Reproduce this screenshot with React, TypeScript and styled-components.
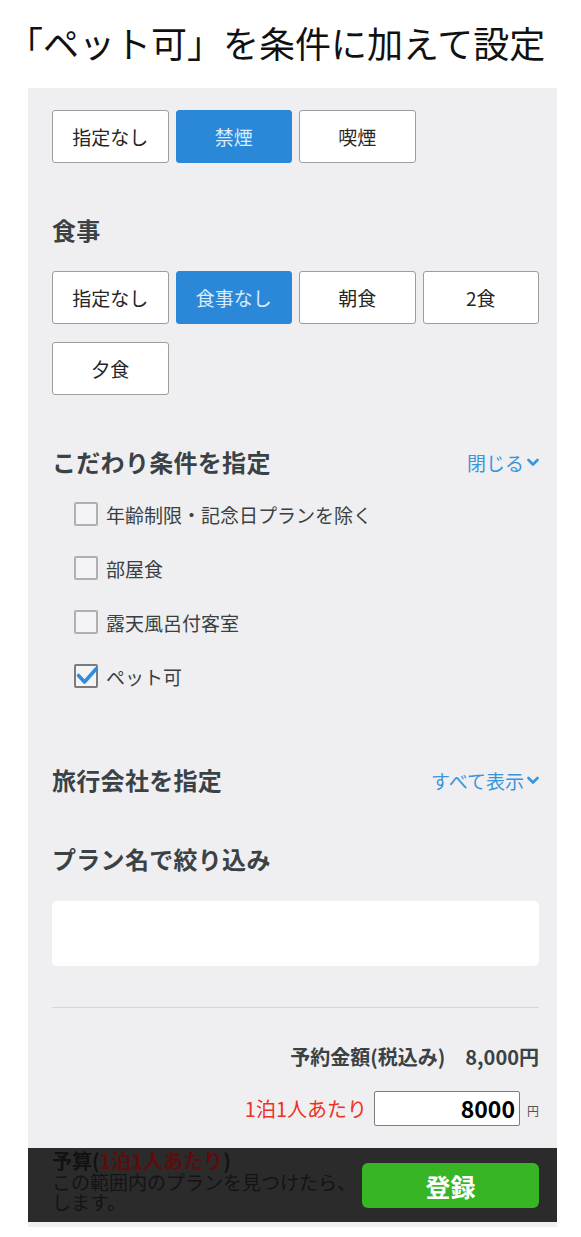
import React from "react";
import styled, { createGlobalStyle } from "styled-components";

const GlobalStyle = createGlobalStyle`
    body {
        margin: 0;
        background: #fff;
        font-family: "Noto Sans CJK JP", "Noto Sans", sans-serif;
    }
    * {
        box-sizing: border-box;
    }
`;

const Page = styled.div`
    width: 581px;
    min-height: 1237px;
    background: #fff;
`;

const Title = styled.h1`
    margin: 0;
    height: 88px;
    padding-left: 7px;
    font-size: 36px;
    font-weight: 400;
    line-height: 84px;
    color: #111;
    white-space: nowrap;
`;

const Panel = styled.div`
    margin-left: 28px;
    width: 529px;
    background: #efeff1;
    padding-bottom: 5px;
`;

const Content = styled.div`
    padding: 22px 18px 22px 24px;
`;

const ChoiceGrid = styled.div<{ $top?: number }>`
    display: grid;
    grid-template-columns: repeat(4, 1fr);
    column-gap: 7px;
    row-gap: 18px;
    margin-top: ${(p) => p.$top ?? 0}px;
`;

const Choice = styled.button<{ $active?: boolean }>`
    height: 53px;
    padding: 0;
    border-radius: 3px;
    border: 1.5px solid ${(p) => (p.$active ? "#2b88d8" : "#9d9d9d")};
    background: ${(p) => (p.$active ? "#2b88d8" : "#fff")};
    color: ${(p) => (p.$active ? "#d8ecfb" : "#262626")};
    font-family: inherit;
    font-size: 19px;
    cursor: pointer;
`;

const SectionHead = styled.div<{ $top: number }>`
    display: flex;
    justify-content: space-between;
    align-items: center;
    height: 32px;
    margin-top: ${(p) => p.$top}px;
`;

const HeadText = styled.h2`
    margin: 0;
    font-size: 24px;
    font-weight: 700;
    line-height: 32px;
    letter-spacing: 0.3px;
    color: #3a4246;
`;

const ToggleLink = styled.a`
    display: flex;
    align-items: center;
    gap: 3px;
    font-size: 19px;
    color: #3a95dc;
    cursor: pointer;
`;

const CheckList = styled.div`
    margin-top: 9px;
    display: flex;
    flex-direction: column;
`;

const CheckRow = styled.label`
    display: flex;
    align-items: center;
    gap: 8px;
    height: 54px;
    padding-left: 22px;
    font-size: 19px;
    color: #3a3f42;
`;

const Box = styled.span<{ $checked?: boolean }>`
    position: relative;
    width: 24px;
    height: 24px;
    border-radius: 2px;
    border: 2px solid ${(p) => (p.$checked ? "#7b7b7b" : "#b0b0b0")};
    background: #f4f4f6;
    flex-shrink: 0;
`;

const CheckMark = styled.svg`
    position: absolute;
    left: -1px;
    top: -3px;
`;

const TextInput = styled.div`
    margin-top: 26px;
    height: 65px;
    background: #fff;
    border-radius: 5px;
`;

const Divider = styled.hr`
    margin: 41px 0 0;
    border: none;
    border-top: 1px solid #d6d6d9;
`;

const PriceLine = styled.div`
    margin-top: 35px;
    display: flex;
    justify-content: flex-end;
    gap: 20px;
    font-size: 20px;
    font-weight: 700;
    line-height: 28px;
    color: #3a4246;
`;

const BudgetRow = styled.div`
    margin-top: 20px;
    display: flex;
    justify-content: flex-end;
    align-items: center;
    gap: 7px;
`;

const RedNote = styled.span`
    font-size: 20px;
    color: #ee3124;
`;

const AmountBox = styled.div`
    width: 146px;
    height: 35px;
    background: #fff;
    border: 1.5px solid #7d7d7d;
    border-radius: 2px;
    padding-right: 4px;
    text-align: right;
    font-size: 23px;
    font-weight: 700;
    line-height: 32px;
    color: #000;
`;

const Yen = styled.span`
    font-size: 12px;
    color: #555;
    margin-top: 4px;
`;

const FooterBar = styled.div`
    display: flex;
    justify-content: space-between;
    align-items: flex-start;
    height: 74px;
    background: #2b2b2b;
    overflow: hidden;
    padding: 2px 18px 0 24px;
`;

const Peek = styled.div`
    width: 312px;
    overflow: hidden;
`;

const PeekTitle = styled.div`
    font-size: 20px;
    font-weight: 700;
    line-height: 22px;
    color: #121212;
`;

const PeekRed = styled.span`
    color: #5c0d0d;
`;

const PeekText = styled.div`
    font-size: 19px;
    line-height: 20px;
    color: #141414;
    white-space: nowrap;
`;

const RegisterButton = styled.button`
    margin-top: 13px;
    width: 177px;
    height: 45px;
    border: none;
    border-radius: 6px;
    background: #38b524;
    color: #fff;
    font-family: inherit;
    font-size: 25px;
    font-weight: 700;
    flex-shrink: 0;
`;

const Chevron = () => (
    <svg width="12" height="9" viewBox="0 0 12 9">
        <polyline points="1.5,2 6,6.5 10.5,2" fill="none" stroke="#3a95dc" strokeWidth="2.6" strokeLinecap="round" strokeLinejoin="round" />
    </svg>
);

const conditions = [
    { label: "年齢制限・記念日プランを除く", checked: false },
    { label: "部屋食", checked: false },
    { label: "露天風呂付客室", checked: false },
    { label: "ペット可", checked: true },
];

const App: React.FC = () => {
    return (
        <Page>
            <GlobalStyle />
            <Title>「ペット可」を条件に加えて設定</Title>
            <Panel>
                <Content>
                    <ChoiceGrid>
                        <Choice>指定なし</Choice>
                        <Choice $active>禁煙</Choice>
                        <Choice>喫煙</Choice>
                    </ChoiceGrid>

                    <SectionHead $top={51}>
                        <HeadText>食事</HeadText>
                    </SectionHead>
                    <ChoiceGrid $top={25}>
                        <Choice>指定なし</Choice>
                        <Choice $active>食事なし</Choice>
                        <Choice>朝食</Choice>
                        <Choice>2食</Choice>
                        <Choice>夕食</Choice>
                    </ChoiceGrid>

                    <SectionHead $top={51}>
                        <HeadText>こだわり条件を指定</HeadText>
                        <ToggleLink>閉じる<Chevron /></ToggleLink>
                    </SectionHead>
                    <CheckList>
                        {conditions.map((c) => (
                            <CheckRow key={c.label}>
                                <Box $checked={c.checked}>
                                    {c.checked && (
                                        <CheckMark width="24" height="24" viewBox="0 0 24 24">
                                            <polyline points="3.5,12.5 9.5,19 21,6" fill="none" stroke="#2d8ee0" strokeWidth="3.6" strokeLinecap="round" strokeLinejoin="round" />
                                        </CheckMark>
                                    )}
                                </Box>
                                {c.label}
                            </CheckRow>
                        ))}
                    </CheckList>

                    <SectionHead $top={61}>
                        <HeadText>旅行会社を指定</HeadText>
                        <ToggleLink>すべて表示<Chevron /></ToggleLink>
                    </SectionHead>

                    <SectionHead $top={47}>
                        <HeadText>プラン名で絞り込み</HeadText>
                    </SectionHead>
                    <TextInput />

                    <Divider />

                    <PriceLine>
                        <span>予約金額(税込み)</span>
                        <span>8,000円</span>
                    </PriceLine>
                    <BudgetRow>
                        <RedNote>1泊1人あたり</RedNote>
                        <AmountBox>8000</AmountBox>
                        <Yen>円</Yen>
                    </BudgetRow>
                </Content>

                <FooterBar>
                    <Peek>
                        <PeekTitle>予算(<PeekRed>1泊1人あたり</PeekRed>)</PeekTitle>
                        <PeekText>この範囲内のプランを見つけたら、</PeekText>
                        <PeekText>します。</PeekText>
                    </Peek>
                    <RegisterButton>登録</RegisterButton>
                </FooterBar>
            </Panel>
        </Page>
    );
};

export default App;
